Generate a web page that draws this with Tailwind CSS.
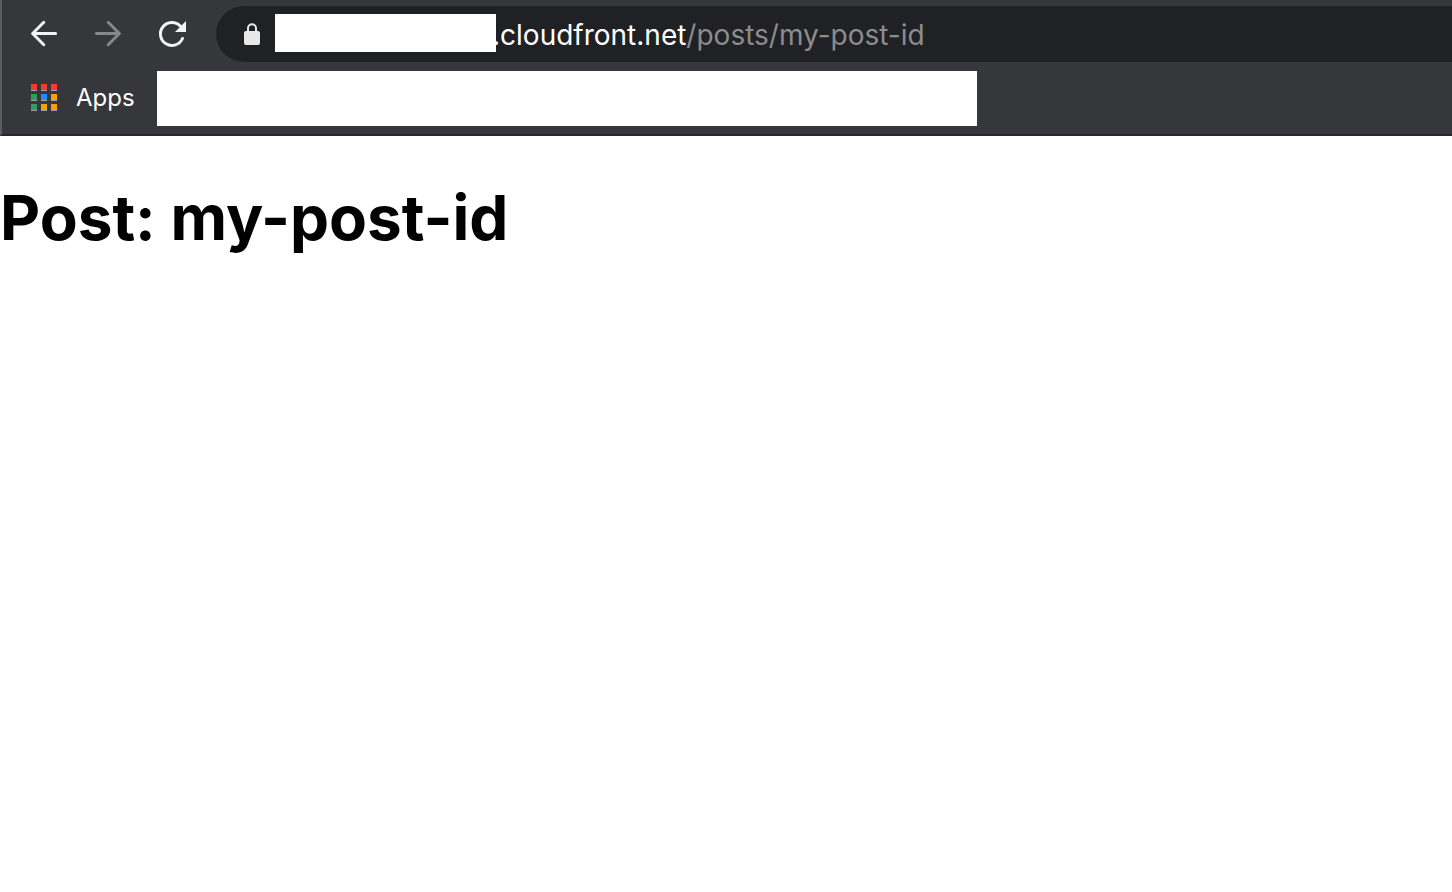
<!DOCTYPE html>
<html lang="en">
<head>
<meta charset="utf-8">
<title>Post: my-post-id</title>
<script src="https://cdn.jsdelivr.net/npm/@tailwindcss/browser@4"></script>
</head>
<body class="min-h-screen bg-white font-['Inter',sans-serif] text-black">
<header class="border-b-2 border-l-2 border-b-[#272729] border-l-[#5c5d61] bg-[#36373b] pt-1.5">
  <div class="flex h-14 items-center">
    <nav class="flex pl-2.5 pr-3" aria-label="History">
      <button class="flex h-14 w-16 items-center justify-center text-[#f1f3f4]" aria-label="Back">
        <svg class="size-8" viewBox="0 0 32 32" fill="none" stroke="currentColor" stroke-width="3" stroke-linecap="round" stroke-linejoin="round"><path d="M27.600 15.500H4.600M15.800 4.300L4.600 15.500l11.200 11.200"/></svg>
      </button>
      <button class="flex h-14 w-16 items-center justify-center text-[#86878a]" aria-label="Forward" disabled>
        <svg class="size-8" viewBox="0 0 32 32" fill="none" stroke="currentColor" stroke-width="3" stroke-linecap="round" stroke-linejoin="round"><path d="M4.400 15.500h23M16.200 4.300l11.200 11.200-11.200 11.200"/></svg>
      </button>
      <button class="flex h-14 w-16 items-center justify-center text-[#f1f3f4]" aria-label="Reload">
        <svg class="size-8" viewBox="0 0 32 32" fill="none"><path d="M26.500 20.500A11.500 11.500 0 1 1 24.300 8" stroke="currentColor" stroke-width="3" stroke-linecap="round"/><path d="M30 3v11H19z" fill="currentColor"/></svg>
      </button>
    </nav>
    <div class="flex h-14 min-w-0 flex-1 items-center overflow-hidden rounded-l-full bg-[#202124] pl-7" role="group" aria-label="Address">
      <svg class="mr-[15px] h-[22px] w-4 shrink-0" viewBox="0 0 16 22" fill="none" aria-hidden="true"><rect y="8" width="16" height="14" rx="2" fill="#e8e8e8"/><path d="M4 9V5.200a4 4 0 0 1 8 0V9" stroke="#e8e8e8" stroke-width="2"/></svg>
      <span class="mb-0.5 h-[38px] w-[221px] shrink-0 bg-white"></span>
      <span class="-ml-1 pt-0.5 whitespace-nowrap text-[28px] leading-8 text-white">.cloudfront.net<span class="text-[#8b8c8e]">/posts/my-post-id</span></span>
    </div>
  </div>
  <div class="flex items-center pt-[9px] pb-2 pl-[29px]">
    <a href="#" class="mb-0.5 flex items-center gap-[19px] text-2xl leading-8 text-white">
      <svg class="h-[27px] w-[26px]" viewBox="0 0 26 27" shape-rendering="crispEdges" aria-hidden="true">
        <path fill="#a0a0a2" d="M0 6h6v1H0zM10 6h6v1h-6zM20 6h6v1h-6zM0 16h6v1H0zM10 16h6v1h-6zM20 16h6v1h-6zM0 26h6v1H0zM10 26h6v1h-6zM20 26h6v1h-6z"/>
        <path fill="#fa3932" d="M0 0h6v6H0zM10 0h6v6h-6zM20 0h6v6h-6z"/>
        <path fill="#31a057" d="M0 10h6v6H0zM0 20h6v6H0z"/>
        <path fill="#1f8cff" d="M10 10h6v6h-6z"/>
        <path fill="#f3a200" d="M20 10h6v6h-6zM10 20h6v6h-6zM20 20h6v6h-6z"/>
      </svg>
      <span>Apps</span>
    </a>
    <span class="ml-[22px] h-[55px] w-[820px] bg-white"></span>
  </div>
</header>
<main class="pt-11">
  <h1 class="text-[62px] leading-[76px] font-bold">Post: my-post-id</h1>
</main>
</body>
</html>
